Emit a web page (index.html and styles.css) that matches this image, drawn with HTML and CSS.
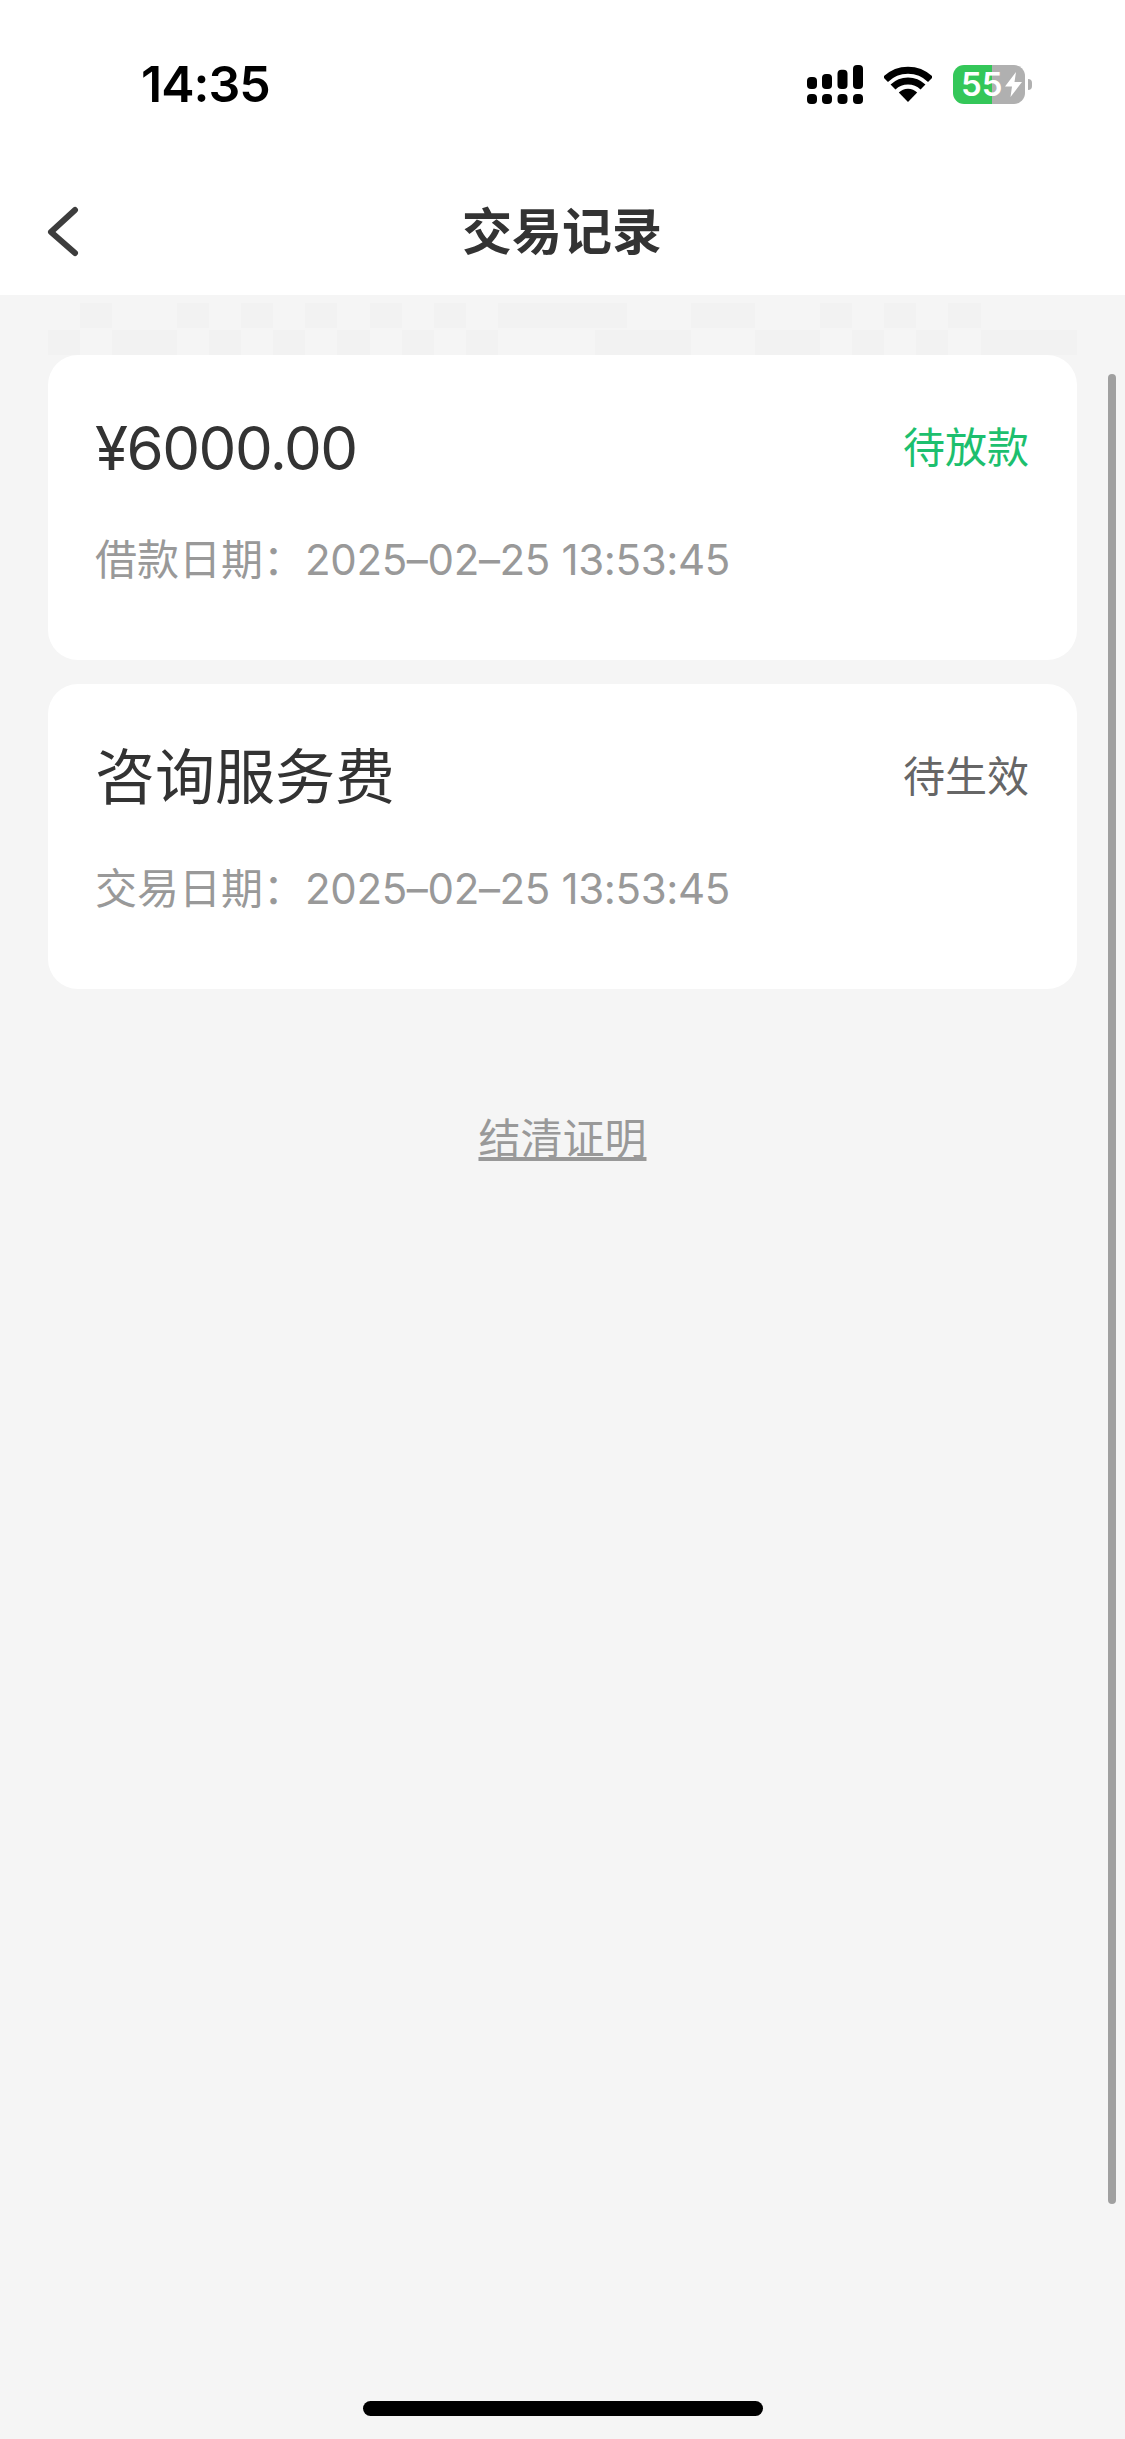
FILE: index.html
```html
<!DOCTYPE html>
<html lang="zh-CN">
<head>
<meta charset="utf-8">
<title>交易记录</title>
<link rel="stylesheet" href="styles.css">
</head>
<body>
<div class="page">
  <header class="header">
    <div class="status">
      <span class="time">14:35</span>
      <div class="status-icons">
        <svg class="signal" viewBox="0 0 56 39" aria-hidden="true">
          <rect x="0" y="12" width="10" height="12" rx="4"/><rect x="15" y="9" width="10" height="15" rx="4"/><rect x="30.5" y="4.7" width="10" height="19.3" rx="4"/><rect x="46" y="0" width="10" height="24" rx="4"/>
          <rect x="0" y="29" width="10" height="10" rx="4"/><rect x="15" y="29" width="10" height="10" rx="4"/><rect x="30.5" y="29" width="10" height="10" rx="4"/><rect x="46" y="29" width="10" height="10" rx="4"/>
        </svg>
        <svg class="wifi" viewBox="0 0 48 36" aria-hidden="true">
          <path class="wifi-arc" d="M1.5 13.5A32 32 0 0 1 46.5 13.5"/>
          <path class="wifi-arc" d="M9 21A21.5 21.5 0 0 1 39 21"/>
          <path d="M24 36L14.8 26.6A13 13 0 0 1 33.2 26.6Z"/>
        </svg>
        <div class="battery">
          <span class="battery-level">55</span>
          <svg class="bolt" viewBox="0 0 17 25" aria-hidden="true"><path d="M11 0L0 14.5H7L5.5 25L17 10H9.5Z"/></svg>
        </div>
      </div>
    </div>
    <nav class="nav">
      <svg class="back" viewBox="0 0 32 52" aria-hidden="true"><path d="M28 4L4 26L28 47"/></svg>
      <h1 class="title">交易记录</h1>
      <span class="nav-end"></span>
    </nav>
  </header>

  <main class="content">
    <div class="mosaic" aria-hidden="true">
      <i class="s1"></i><i class="s1 on"></i><i class="s2"></i><i class="s1 on"></i><i class="s1"></i><i class="s1 on"></i><i class="s1"></i><i class="s1 on"></i><i class="s1"></i><i class="s1 on"></i><i class="s1"></i><i class="s1 on"></i><i class="s1"></i><i class="s4 on"></i><i class="s2"></i><i class="s2 on"></i><i class="s2"></i><i class="s1 on"></i><i class="s1"></i><i class="s1 on"></i><i class="s1"></i><i class="s1 on"></i><i class="s3"></i>
      <i class="s1 on"></i><i class="s1"></i><i class="s2 on"></i><i class="s1"></i><i class="s1 on"></i><i class="s1"></i><i class="s1 on"></i><i class="s1"></i><i class="s1 on"></i><i class="s1"></i><i class="s1 on"></i><i class="s1"></i><i class="s1 on"></i><i class="s3"></i><i class="s3 on"></i><i class="s2"></i><i class="s2 on"></i><i class="s1"></i><i class="s1 on"></i><i class="s1"></i><i class="s1 on"></i><i class="s1"></i><i class="s3 on"></i>
    </div>

    <section class="card">
      <div class="card-row">
        <span class="card-title card-amount">¥6000.00</span>
        <span class="state state-green">待放款</span>
      </div>
      <p class="card-date">借款日期：<span class="date-num">2025–02–25 13:53:45</span></p>
    </section>

    <section class="card">
      <div class="card-row">
        <span class="card-title">咨询服务费</span>
        <span class="state state-gray">待生效</span>
      </div>
      <p class="card-date">交易日期：<span class="date-num">2025–02–25 13:53:45</span></p>
    </section>

    <a class="proof" href="#">结清证明</a>
  </main>

  <div class="scrollbar"></div>
  <div class="home-bar"></div>
</div>
</body>
</html>
```

FILE: styles.css
```css
* { box-sizing: border-box; }
html, body { margin: 0; padding: 0; }
body {
  background: #f5f5f5;
  font-family: Inter, "Noto Sans CJK SC", sans-serif;
}
.page {
  position: relative;
  width: 1125px;
  height: 2439px;
  overflow: hidden;
  background: #f5f5f5;
}
.header { background: #fff; height: 295px; }
.status {
  height: 168px;
  padding: 0 93px 0 141px;
  display: flex;
  align-items: center;
  justify-content: space-between;
}
.time {
  font-size: 50px;
  line-height: 60px;
  font-weight: 600;
  color: #000;
  letter-spacing: -1px;
}
.status-icons { display: flex; align-items: center; gap: 21px; }
.signal { width: 56px; height: 39px; fill: #000; }
.wifi { width: 48px; height: 36px; fill: #000; }
.wifi-arc { fill: none; stroke: #000; stroke-width: 7; }
.battery {
  position: relative;
  width: 72px;
  height: 39px;
  margin-right: 7px;
  border-radius: 11px;
  background: linear-gradient(90deg, #34c759 39px, #b0b0b0 39px);
  display: flex;
  align-items: center;
  padding-left: 8px;
  gap: 4px;
}
.battery::after {
  content: "";
  position: absolute;
  right: -7px;
  top: 14px;
  width: 4px;
  height: 11px;
  border-radius: 0 6px 6px 0;
  background: #b0b0b0;
}
.battery-level {
  font-size: 33px;
  line-height: 39px;
  font-weight: 600;
  color: #fff;
}
.bolt { width: 17px; height: 25px; fill: #fff; flex: none; margin-left: -2px; }
.nav {
  height: 127px;
  padding: 0 47px;
  display: grid;
  grid-template-columns: 1fr auto 1fr;
  align-items: center;
}
.back {
  width: 32px;
  height: 52px;
  fill: none;
  stroke: #3d3d3d;
  stroke-width: 6;
  stroke-linecap: round;
  stroke-linejoin: round;
}
.title {
  margin: 0 1px 0 0;
  font-size: 50px;
  line-height: 60px;
  font-weight: 700;
  color: #333;
}
.content {
  padding: 8px 48px 0;
  display: flex;
  flex-direction: column;
}
.mosaic {
  display: grid;
  grid-template-columns: repeat(32, 1fr);
  grid-auto-rows: 25px;
  row-gap: 2px;
}
.mosaic i { display: block; }
.mosaic .on { background: #f2f2f2; }
.s1 { grid-column: span 1; }
.s2 { grid-column: span 2; }
.s3 { grid-column: span 3; }
.s4 { grid-column: span 4; }
.card {
  background: #fff;
  border-radius: 30px;
  padding: 48px 48px 71px 47px;
  margin-bottom: 24px;
}
.card-row {
  display: flex;
  align-items: center;
  justify-content: space-between;
  height: 90px;
}
.card-title {
  font-size: 60px;
  line-height: 90px;
  color: #333;
}
.card-amount { letter-spacing: -1.5px; }
.state { font-size: 42px; line-height: 58px; }
.state-green { color: #1dbf6e; }
.state-gray { color: #666; }
.card-date {
  margin: 38px 0 0;
  font-size: 42px;
  line-height: 58px;
  color: #999;
}
.date-num { letter-spacing: -0.35px; }
.proof {
  align-self: center;
  margin-top: 97px;
  font-size: 42px;
  line-height: 58px;
  color: #999;
  text-decoration: underline;
}
.scrollbar {
  position: absolute;
  left: 1108px;
  top: 374px;
  width: 8px;
  height: 1830px;
  border-radius: 4px;
  background: #a0a0a0;
}
.home-bar {
  position: absolute;
  left: 363px;
  top: 2401px;
  width: 400px;
  height: 15px;
  border-radius: 8px;
  background: #000;
}
```
